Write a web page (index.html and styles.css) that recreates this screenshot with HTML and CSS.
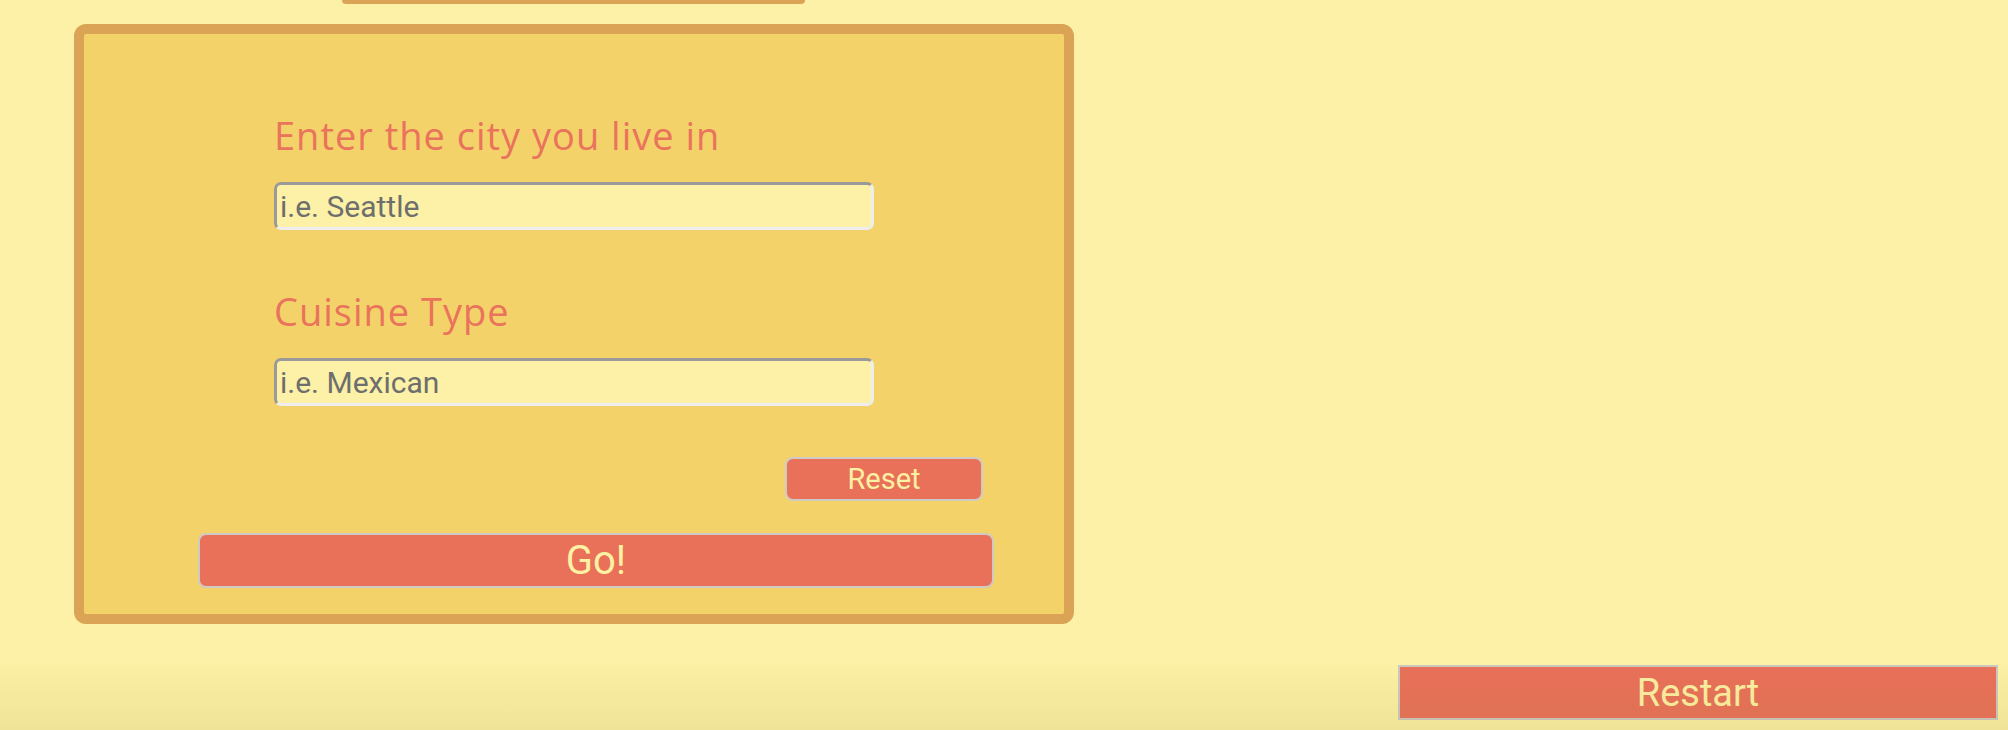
FILE: index.html
```html
<!DOCTYPE html>
<html lang="en">
<head>
<meta charset="utf-8">
<title>Find food</title>
<link rel="stylesheet" href="styles.css">
</head>
<body>
<div class="page">
  <div class="top-tab"></div>
  <form class="card">
    <label class="label label-first" for="city">Enter the city you live in</label>
    <input class="field" id="city" type="text" placeholder="i.e. Seattle">
    <label class="label label-second" for="cuisine">Cuisine Type</label>
    <input class="field" id="cuisine" type="text" placeholder="i.e. Mexican">
    <button class="btn btn-reset" type="button">Reset</button>
    <button class="btn btn-go" type="button">Go!</button>
  </form>
  <div class="restart-row">
    <button class="btn btn-restart" type="button">Restart</button>
  </div>
</div>
<div class="bottom-shade"></div>
</body>
</html>
```

FILE: styles.css
```css
html, body {
  margin: 0;
  padding: 0;
  background: #fcf1a6;
}

body {
  font-family: Roboto, "Liberation Sans", sans-serif;
  min-height: 730px;
  overflow: hidden;
}

.page {
  display: flex;
  flex-direction: column;
  align-items: flex-start;
}

.top-tab {
  margin-left: 342px;
  width: 463px;
  height: 4px;
  background: #dba355;
  border-radius: 0 0 6px 6px;
}

.card {
  box-sizing: border-box;
  margin-top: 20px;
  margin-left: 74px;
  width: 1000px;
  height: 600px;
  border: 10px solid #dba355;
  border-radius: 12px;
  background: #f4d26a;
  display: flex;
  flex-direction: column;
  align-items: flex-start;
}

.label {
  display: block;
  margin-left: 190px;
  font-family: "Open Sans", Lato, sans-serif;
  font-size: 38px;
  font-weight: 500;
  letter-spacing: 1px;
  line-height: 46px;
  color: #ea735c;
}

.label-first {
  margin-top: 78px;
  margin-bottom: 24px;
}

.label-second {
  margin-top: 58px;
  margin-bottom: 24px;
}

.field {
  box-sizing: border-box;
  margin: 0 0 0 190px;
  width: 600px;
  height: 48px;
  padding: 0 4px 0 3px;
  border-style: solid;
  border-width: 3px;
  border-color: #9a9a9a #eeeeee #eeeeee #9a9a9a;
  border-radius: 7px;
  background: #fcf1a6;
  font-family: Roboto, "Liberation Sans", sans-serif;
  font-size: 30px;
  color: #444;
  outline: none;
}

.field::placeholder {
  color: #6e6e6e;
  opacity: 1;
}

.btn {
  box-sizing: border-box;
  margin: 0;
  padding: 0;
  border: 2px solid #cfcac3;
  background: #e97059;
  color: #fdf1a3;
  font-family: Roboto, "Liberation Sans", sans-serif;
  cursor: pointer;
}

.btn-reset {
  margin-top: 51px;
  margin-left: 701px;
  width: 198px;
  height: 44px;
  border-radius: 8px;
  font-size: 29px;
}

.btn-go {
  margin-top: 32px;
  margin-left: 114px;
  width: 796px;
  height: 55px;
  border-radius: 8px;
  font-size: 40px;
}

.restart-row {
  align-self: stretch;
  display: flex;
  justify-content: flex-end;
  margin-top: 41px;
  padding-right: 10px;
}

.btn-restart {
  width: 600px;
  height: 55px;
  border-radius: 0;
  border-color: #cdc8c0;
  font-size: 38px;
}

.bottom-shade {
  position: fixed;
  left: 0;
  right: 0;
  bottom: 0;
  height: 70px;
  pointer-events: none;
  background: linear-gradient(to bottom, rgba(150, 130, 50, 0), rgba(150, 130, 50, 0.12));
}
```
